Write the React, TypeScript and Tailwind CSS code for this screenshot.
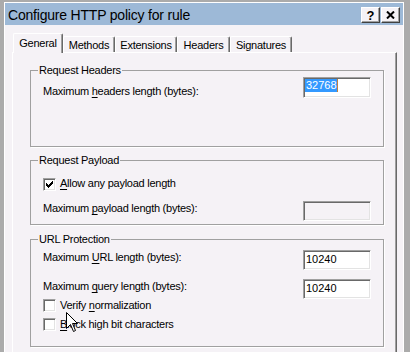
import React from "react";

const Check = () => (
  <svg width="7" height="7" viewBox="0 0 7 7" shapeRendering="crispEdges" className="block">
    <rect x="6" y="0" width="1" height="1" fill="#000" />
    <rect x="5" y="1" width="2" height="1" fill="#000" />
    <rect x="0" y="2" width="1" height="1" fill="#000" />
    <rect x="4" y="2" width="3" height="1" fill="#000" />
    <rect x="0" y="3" width="2" height="1" fill="#000" />
    <rect x="3" y="3" width="3" height="1" fill="#000" />
    <rect x="0" y="4" width="5" height="1" fill="#000" />
    <rect x="1" y="5" width="3" height="1" fill="#000" />
    <rect x="2" y="6" width="1" height="1" fill="#000" />
  </svg>
);

const CheckBox = ({ checked, className = "" }: { checked?: boolean; className?: string }) => (
  <div
    className={`w-[13px] h-[13px] shrink-0 bg-white border border-t-[#a0a0a0] border-l-[#a0a0a0] border-b-white border-r-white shadow-[inset_1px_1px_0_#696969,inset_-1px_-1px_0_#e3e3e3] flex items-center justify-center ${className}`}
  >
    {checked && <Check />}
  </div>
);

const TextBox = ({
  children,
  disabled,
  className = "",
}: {
  children?: React.ReactNode;
  disabled?: boolean;
  className?: string;
}) => (
  <div
    className={`w-[68px] shrink-0 border border-t-[#a0a0a0] border-l-[#a0a0a0] border-b-white border-r-white shadow-[inset_1px_1px_0_#696969,inset_-1px_-1px_0_#e3e3e3] ${
      disabled ? "bg-[#f5f2f6]" : "bg-white"
    } ${className}`}
  >
    {children}
  </div>
);

const Group = ({
  title,
  className,
  children,
}: {
  title: string;
  className: string;
  children: React.ReactNode;
}) => (
  <fieldset
    className={`ml-[17px] w-[354px] border border-[#a0a0a0] shadow-[1px_1px_0_#ffffff] ${className}`}
  >
    <legend className="ml-[7px] px-[1px] leading-[13px]">{title}</legend>
    <div className="px-[12px]">{children}</div>
  </fieldset>
);

export default function App() {
  return (
    <div className="w-[410px] h-[352px] bg-[#ababab] overflow-hidden pl-[4px] pt-[2px] font-['Liberation_Sans',Arial,sans-serif] text-[11px] tracking-[-0.25px] text-black relative">
      <div className="w-[400px] h-[360px] bg-[#f5f2f6] border-l border-t border-r border-white flex flex-col">
        {/* Title bar */}
        <div className="h-[22px] shrink-0 bg-[#9db9d7] flex items-start pl-[3px] pr-[3px]">
          <span className="flex-1 text-[14px] tracking-[-0.2px] leading-[20px] pt-[2px]">
            Configure HTTP policy for rule
          </span>
          <div className="flex gap-[1px] mt-[4px]">
            <div className="w-[19px] h-[16px] bg-[#f5f2f6] border border-t-white border-l-white border-b-[#404040] border-r-[#404040] shadow-[inset_-1px_-1px_0_#a0a0a0] flex items-center justify-center">
              <span className="text-[13px] font-bold leading-[13px] tracking-normal">?</span>
            </div>
            <div className="w-[19px] h-[16px] bg-[#f5f2f6] border border-t-white border-l-white border-b-[#404040] border-r-[#404040] shadow-[inset_-1px_-1px_0_#a0a0a0] flex items-center justify-center">
              <svg width="9" height="8" viewBox="0 0 9 8" className="block">
                <path d="M1 0.5 L8 7.5 M8 0.5 L1 7.5" stroke="#000" strokeWidth="2" />
              </svg>
            </div>
          </div>
        </div>

        {/* Tabs */}
        <div className="mt-[8px] ml-[8px] flex items-end relative z-10">
          <div className="w-[50px] h-[20px] -mb-px bg-[#f5f2f6] border-t border-l border-white border-r border-r-[#696969] shadow-[inset_-1px_0_0_#a0a0a0] rounded-t-[2px] text-center leading-[13px] pt-[3px] relative z-10">
            General
          </div>
          <div className="w-[52px] h-[16px] border-t border-l border-white border-r border-r-[#696969] shadow-[inset_-1px_0_0_#a0a0a0] rounded-t-[2px] text-center leading-[13px] pt-[2px]">
            Methods
          </div>
          <div className="w-[62px] h-[16px] border-t border-l border-white border-r border-r-[#696969] shadow-[inset_-1px_0_0_#a0a0a0] rounded-t-[2px] text-center leading-[13px] pt-[2px]">
            Extensions
          </div>
          <div className="w-[53px] h-[16px] border-t border-l border-white border-r border-r-[#696969] shadow-[inset_-1px_0_0_#a0a0a0] rounded-t-[2px] text-center leading-[13px] pt-[2px]">
            Headers
          </div>
          <div className="w-[62px] h-[16px] border-t border-l border-white border-r border-r-[#696969] shadow-[inset_-1px_0_0_#a0a0a0] rounded-t-[2px] text-center leading-[13px] pt-[2px]">
            Signatures
          </div>
        </div>

        {/* Panel */}
        <div className="ml-[7px] w-[385px] flex-1 border-t border-l border-white border-r border-r-[#696969] shadow-[inset_-1px_0_0_#a0a0a0] flex flex-col">
          <Group title="Request Headers" className="mt-[11px] h-[83px]">
            <div className="flex justify-between items-start">
              <span className="mt-[8px] leading-[13px]">
                Maximum <span className="underline underline-offset-[2px]">h</span>eaders length (bytes):
              </span>
              <TextBox className="h-[21px] pl-[1px] pt-[1px] flex items-start">
                <span className="relative bg-[#3399ff] text-white leading-[13px] px-[1px] tracking-normal">
                  32768
                  <span className="absolute right-0 top-0 w-px h-[13px] bg-[#c08040]" />
                </span>
              </TextBox>
            </div>
          </Group>

          <Group title="Request Payload" className="mt-[7px] h-[71px]">
            <div className="mt-[10px] flex items-start h-[13px]">
              <CheckBox checked className="mt-[1px]" />
              <span className="ml-[4px] leading-[13px]">
                <span className="underline underline-offset-[2px]">A</span>llow any payload length
              </span>
            </div>
            <div className="mt-[11px] flex justify-between items-start">
              <span className="mt-[1px] leading-[13px]">
                Maximum <span className="underline underline-offset-[2px]">p</span>ayload length (bytes):
              </span>
              <TextBox disabled className="h-[20px]" />
            </div>
          </Group>

          <Group title="URL Protection" className="mt-[8px] h-[114px]">
            <div className="mt-[4px] flex justify-between items-start">
              <span className="mt-[1px] leading-[13px]">
                Maximum <span className="underline underline-offset-[2px]">U</span>RL length (bytes):
              </span>
              <TextBox className="h-[20px] pl-[2px] pt-[2px] leading-[13px] tracking-normal">10240</TextBox>
            </div>
            <div className="mt-[9px] flex justify-between items-start">
              <span className="mt-[1px] leading-[13px]">
                Maximum <span className="underline underline-offset-[2px]">q</span>uery length (bytes):
              </span>
              <TextBox className="h-[20px] pl-[2px] pt-[2px] leading-[13px] tracking-normal">10240</TextBox>
            </div>
            <div className="flex items-start h-[13px]">
              <CheckBox />
              <span className="ml-[4px] leading-[13px]">
                Verify <span className="underline underline-offset-[2px]">n</span>ormalization
              </span>
            </div>
            <div className="mt-[6px] flex items-start h-[13px]">
              <CheckBox />
              <span className="ml-[4px] leading-[13px]">
                <span className="underline underline-offset-[2px]">B</span>lock high bit characters
              </span>
            </div>
          </Group>
        </div>
      </div>

      {/* Mouse cursor */}
      <svg
        width="14"
        height="22"
        viewBox="0 0 14 22"
        className="absolute left-[65px] top-[311px]"
      >
        <path
          d="M1.5 1.5 V17.5 L5.5 13.5 L8.5 20.5 L10.5 19.5 L7.5 12.5 H12.5 Z"
          fill="#fff"
          stroke="#000"
          strokeWidth="1"
        />
      </svg>
    </div>
  );
}
